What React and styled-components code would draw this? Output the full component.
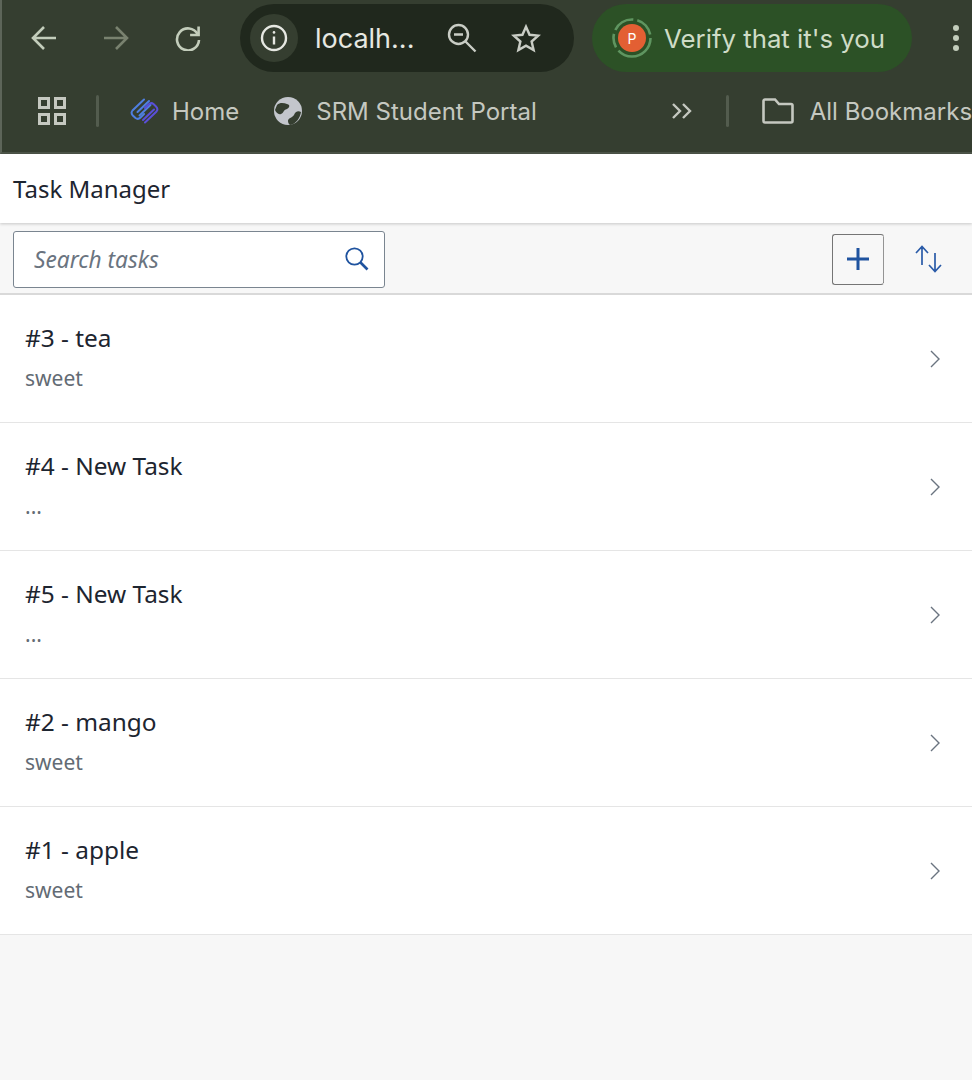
import React from "react";
import styled, { createGlobalStyle } from "styled-components";

const Global = createGlobalStyle`
  html, body { margin: 0; padding: 0; background: #f7f7f7; }
  * { box-sizing: border-box; }
`;

const Page = styled.div`
  width: 972px;
  height: 1080px;
  overflow: hidden;
  display: flex;
  flex-direction: column;
  background: #f7f7f7;
  font-family: "Noto Sans", Inter, sans-serif;
`;

const BrowserChrome = styled.div`
  height: 154px;
  flex: none;
  background: #353e30;
  border-left: 2px solid #5d6559;
  border-bottom: 2px solid #4c5448;
  font-family: Inter, Roboto, sans-serif;
  overflow: hidden;
`;

const TopRow = styled.div`
  height: 68px;
  margin-top: 4px;
  display: flex;
  align-items: center;
  padding-left: 18px;
  gap: 24px;
  white-space: nowrap;
`;

const NavButton = styled.div`
  width: 48px;
  height: 48px;
  flex: none;
  display: flex;
  align-items: center;
  justify-content: center;
`;

const AddressPill = styled.div`
  width: 334px;
  height: 68px;
  flex: none;
  margin-left: 4px;
  border-radius: 34px;
  background: #20281d;
  display: flex;
  align-items: center;
  padding-left: 10px;
`;

const InfoBadge = styled.div`
  width: 48px;
  height: 48px;
  flex: none;
  border-radius: 50%;
  background: #353e30;
  display: flex;
  align-items: center;
  justify-content: center;
`;

const Url = styled.span`
  margin-left: 17px;
  width: 120px;
  flex: none;
  font-size: 27px;
  color: #e6e8e2;
`;

const PillIcon = styled.div`
  width: 30px;
  height: 30px;
  flex: none;
  margin-left: ${(p) => p.$gap}px;
  display: flex;
  align-items: center;
  justify-content: center;
`;

const VerifyPill = styled.div`
  width: 320px;
  height: 68px;
  flex: none;
  margin-left: -6px;
  border-radius: 34px;
  background: #2c5126;
  display: flex;
  align-items: center;
  padding-left: 20px;
  gap: 12px;
`;

const Avatar = styled.div`
  position: relative;
  width: 40px;
  height: 40px;
  flex: none;
  display: flex;
  align-items: center;
  justify-content: center;
`;

const AvatarRing = styled.svg`
  position: absolute;
  inset: 0;
`;

const AvatarFace = styled.div`
  width: 28px;
  height: 28px;
  border-radius: 50%;
  background: #e35f33;
  color: #fff;
  font-size: 14px;
  display: flex;
  align-items: center;
  justify-content: center;
`;

const VerifyText = styled.span`
  font-size: 25.8px;
  color: #cfdcc6;
`;

const Dots = styled.div`
  width: 6px;
  height: 26px;
  flex: none;
  display: flex;
  flex-direction: column;
  justify-content: space-between;
  margin-left: 17px;
`;

const Dot = styled.span`
  width: 6px;
  height: 6px;
  border-radius: 50%;
  background: #c3cdbb;
`;

const BookmarkRow = styled.div`
  height: 78px;
  display: flex;
  align-items: center;
  padding-left: 36px;
  white-space: nowrap;
`;

const Separator = styled.span`
  width: 3px;
  height: 32px;
  flex: none;
  border-radius: 2px;
  background: #535c4e;
  margin-left: ${(p) => p.$before}px;
  margin-right: ${(p) => p.$after}px;
`;

const BookmarkIcon = styled.div`
  flex: none;
  width: ${(p) => p.$w}px;
  height: 32px;
  margin-left: ${(p) => p.$before || 0}px;
  display: flex;
  align-items: center;
  justify-content: center;
`;

const BookmarkLabel = styled.span`
  font-size: 24px;
  color: #c5c8c0;
  margin-left: ${(p) => p.$gap}px;
  flex: none;
`;

const ShellBar = styled.header`
  height: 69px;
  flex: none;
  background: #fff;
  padding-left: 13px;
  display: flex;
  align-items: center;
  font-size: 24px;
  color: #1d2530;
  box-shadow: 0 1px 3px rgba(0, 0, 0, 0.2);
  position: relative;
`;

const Toolbar = styled.div`
  height: 72px;
  flex: none;
  padding: 2px 28px 0 13px;
  display: flex;
  align-items: center;
  background: #f7f7f7;
  border-bottom: 2px solid #d9d9d9;
`;

const SearchBox = styled.div`
  width: 372px;
  height: 57px;
  border: 1px solid #7a8590;
  border-radius: 3px;
  background: #fff;
  display: flex;
  align-items: center;
  justify-content: space-between;
  padding: 0 15px 0 20px;
  font-style: italic;
  font-size: 22.7px;
  color: #6a7480;
`;

const AddButton = styled.div`
  width: 52px;
  height: 51px;
  margin-left: auto;
  border: 1px solid #757575;
  border-right: 1px dotted #333;
  border-radius: 3px;
  display: flex;
  align-items: center;
  justify-content: center;
`;

const SortButton = styled.div`
  width: 30px;
  height: 30px;
  margin-left: 30px;
  display: flex;
  align-items: center;
  justify-content: center;
`;

const List = styled.ul`
  list-style: none;
  margin: 0;
  padding: 0;
`;

const Item = styled.li`
  height: 128px;
  background: #fff;
  border-bottom: 1px solid #e5e5e5;
  display: flex;
  align-items: center;
  justify-content: space-between;
  padding: 0 32px 0 25px;
`;

const ItemText = styled.div`
  display: flex;
  flex-direction: column;
  gap: 6px;
  margin-top: -4px;
`;

const Title = styled.div`
  font-size: 24.4px;
  line-height: 34px;
  color: #1d2530;
`;

const Subtitle = styled.div`
  font-size: 21px;
  line-height: 28px;
  margin-top: 3px;
  color: #636b74;
`;

const c = "#c3cdbb";

const tasks = [
  ["#3 - tea", "sweet"],
  ["#4 - New Task", "..."],
  ["#5 - New Task", "..."],
  ["#2 - mango", "sweet"],
  ["#1 - apple", "sweet"],
];

export default function App() {
  return (
    <Page>
      <Global />
      <BrowserChrome>
        <TopRow>
          <NavButton>
            <svg width="28" height="26" viewBox="0 0 28 26" fill="none" stroke={c} strokeWidth="2.6">
              <path d="M26 13H3M14 2 3 13l11 11" />
            </svg>
          </NavButton>
          <NavButton>
            <svg width="28" height="26" viewBox="0 0 28 26" fill="none" stroke="#79826f" strokeWidth="2.6">
              <path d="M2 13h23M14 2l11 11-11 11" />
            </svg>
          </NavButton>
          <NavButton>
            <svg width="28" height="26" viewBox="0 0 28 26" fill="none" stroke={c} strokeWidth="2.6">
              <path d="M23.6 9A11 11 0 1 0 25 15" />
              <path d="M24.6 1.500v8.500h-8.500" />
            </svg>
          </NavButton>
          <AddressPill>
            <InfoBadge>
              <svg width="28" height="28" viewBox="0 0 28 28" fill="none" stroke="#e6e8e2" strokeWidth="2.4">
                <circle cx="14" cy="14" r="12" />
                <path d="M14 12.500v8" />
                <circle cx="14" cy="8.400" r="1.300" fill="#e6e8e2" stroke="none" />
              </svg>
            </InfoBadge>
            <Url>localh...</Url>
            <PillIcon $gap={12}>
              <svg width="30" height="30" viewBox="0 0 30 30" fill="none" stroke="#c9cdc5" strokeWidth="2.4">
                <circle cx="11.500" cy="11.500" r="9.500" />
                <path d="M7 11.500h9M18.500 18.500l10 10" />
              </svg>
            </PillIcon>
            <PillIcon $gap={34}>
              <svg width="32" height="30" viewBox="0 0 32 30" fill="none" stroke="#c9cdc5" strokeWidth="2.6">
                <path d="m16 3 3.800 8.600 9.200.9-7 6.200 2.100 9.200-8.100-4.800-8.100 4.800 2.100-9.200-7-6.200 9.200-.9z" />
              </svg>
            </PillIcon>
          </AddressPill>
          <VerifyPill>
            <Avatar>
              <AvatarRing width="40" height="40" viewBox="0 0 40 40" fill="none" stroke="#5f9560" strokeWidth="2.6">
                <circle cx="20" cy="20" r="18.500" strokeDasharray="44 4 14 4 22 4 20 4" />
              </AvatarRing>
              <AvatarFace>P</AvatarFace>
            </Avatar>
            <VerifyText>Verify that it's you</VerifyText>
          </VerifyPill>
          <Dots>
            <Dot />
            <Dot />
            <Dot />
          </Dots>
        </TopRow>
        <BookmarkRow>
          <BookmarkIcon $w={28}>
            <svg width="28" height="28" viewBox="0 0 28 28" fill="none" stroke="#c5c8c0" strokeWidth="3">
              <rect x="1.500" y="1.500" width="9" height="9" />
              <rect x="17.500" y="1.500" width="9" height="9" />
              <rect x="1.500" y="17.500" width="9" height="9" />
              <rect x="17.500" y="17.500" width="9" height="9" />
            </svg>
          </BookmarkIcon>
          <Separator $before={30} $after={31} />
          <BookmarkIcon $w={29}>
            <svg width="29" height="26" viewBox="0 0 29 26" fill="none" strokeWidth="2" strokeLinecap="round">
              <g stroke="#4f7fe0">
                <path d="M14 1.500 2.500 12.500Q.5 15 2.800 17.500L5.500 20Q8 22 10.500 19.500L14 16" />
                <path d="M19 3 7.500 14" />
                <path d="M20.500 7 9.500 17.500" />
              </g>
              <g stroke="#5a4fd8">
                <path d="M15 24.500 26.500 13.500Q28.500 11 26 8.500L23.500 6Q21 4 18.500 6.500L15 10" />
                <path d="M24 11.500 13 22" />
              </g>
            </svg>
          </BookmarkIcon>
          <BookmarkLabel $gap={13}>Home</BookmarkLabel>
          <BookmarkIcon $w={28} $before={35}>
            <svg width="28" height="28" viewBox="0 0 28 28">
              <circle cx="14" cy="14" r="14" fill="#c3c6cc" />
              <path d="M3 8C6 5 10 6 13 7c4 1 2 4 0 5-4 1-3 4-6 5-3 1-5-2-6-4zM27 15c-3-2-6 0-7 3-2 3-6 3-6 6 0 2 1 3 2 4 6-1 10-7 11-13z" fill="#353e30" />
            </svg>
          </BookmarkIcon>
          <BookmarkLabel $gap={14}>SRM Student Portal</BookmarkLabel>
          <BookmarkIcon $w={20} $before={135}>
            <svg width="20" height="16" viewBox="0 0 20 16" fill="none" stroke="#c5c8c0" strokeWidth="2.4">
              <path d="m1 1 7 7-7 7M11 1l7 7-7 7" />
            </svg>
          </BookmarkIcon>
          <Separator $before={34} $after={33} />
          <BookmarkIcon $w={32}>
            <svg width="32" height="26" viewBox="0 0 32 26" fill="none" stroke="#c5c8c0" strokeWidth="2.6">
              <path d="M1.500 3a1.500 1.500 0 0 1 1.500-1.500h10l4 4.500h12a1.500 1.500 0 0 1 1.500 1.500V23a1.500 1.500 0 0 1-1.500 1.500H3A1.500 1.500 0 0 1 1.500 23z" />
            </svg>
          </BookmarkIcon>
          <BookmarkLabel $gap={16}>All Bookmarks</BookmarkLabel>
        </BookmarkRow>
      </BrowserChrome>
      <ShellBar>Task Manager</ShellBar>
      <Toolbar>
        <SearchBox>
          Search tasks
          <svg width="24" height="24" viewBox="0 0 24 24" fill="none" stroke="#1f539f" strokeWidth="1.800">
            <circle cx="9.500" cy="9.500" r="8.200" />
            <path d="m15.500 15.500 7 7" strokeWidth="2.600" />
          </svg>
        </SearchBox>
        <AddButton>
          <svg width="24" height="24" viewBox="0 0 24 24" fill="none" stroke="#1f539f" strokeWidth="3">
            <path d="M12 1v22M1 12h22" />
          </svg>
        </AddButton>
        <SortButton>
          <svg width="28" height="28" viewBox="0 0 28 28" fill="none" stroke="#2a5ba8" strokeWidth="1.700">
            <path d="M7 20V1.500M1 8l6-6.500L13 8M20 8v18.500M14 20l6 6.500L26 20" />
          </svg>
        </SortButton>
      </Toolbar>
      <List>
        {tasks.map(([t, s]) => (
          <Item key={t}>
            <ItemText>
              <Title>{t}</Title>
              <Subtitle>{s}</Subtitle>
            </ItemText>
            <svg width="10" height="18" viewBox="0 0 10 18" fill="none" stroke="#6a7480" strokeWidth="1.400">
              <path d="m1 1 8 8-8 8" />
            </svg>
          </Item>
        ))}
      </List>
    </Page>
  );
}
